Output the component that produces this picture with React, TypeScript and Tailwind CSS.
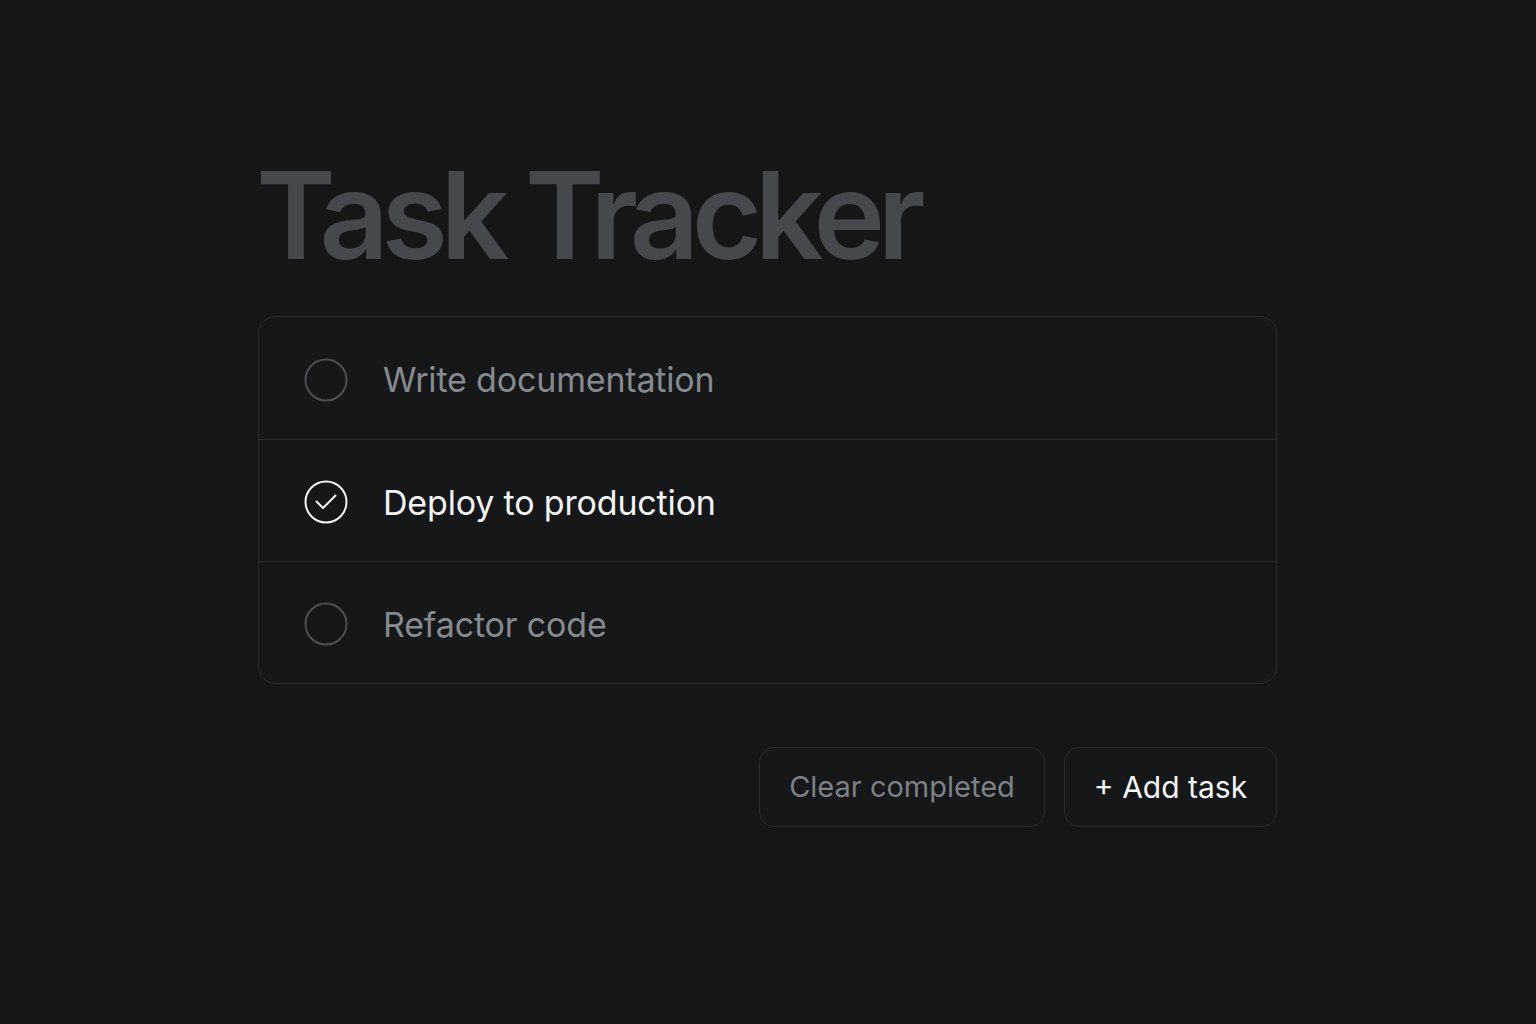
import React from "react";

const tasks = [
  { label: "Write documentation", done: false },
  { label: "Deploy to production", done: true },
  { label: "Refactor code", done: false },
];

function Circle({ done }: { done: boolean }) {
  return (
    <svg width="44" height="44" viewBox="0 0 44 44" className="shrink-0">
      <circle
        cx="22"
        cy="22"
        r="20.5"
        fill="none"
        stroke={done ? "#f2f3f4" : "#4b4e53"}
        strokeWidth="2"
      />
      {done && (
        <path
          d="M12.5 21.5 L19 28 L31.5 15.5"
          fill="none"
          stroke="#f2f3f4"
          strokeWidth="2"
          strokeLinecap="round"
          strokeLinejoin="round"
        />
      )}
    </svg>
  );
}

export default function App() {
  return (
    <div
      className="w-full h-[1024px] bg-[#151618] flex flex-col pl-[258px] pt-[140px]"
      style={{ fontFamily: "Inter, 'Noto Sans', sans-serif" }}
    >
      <h1 className="text-[121px] leading-[150px] font-semibold tracking-[-0.062em] text-[#45484c] ml-[-2px]">
        Task Tracker
      </h1>
      <div className="mt-[26px] w-[1019px] rounded-[17px] border border-[#2a2c30] bg-[#161719] flex flex-col">
        {tasks.map((t, i) => (
          <div
            key={t.label}
            className={`h-[122px] flex items-center pl-[45px] pt-[3px] gap-[35px] ${
              i > 0 ? "border-t border-[#2a2c30]" : ""
            }`}
          >
            <Circle done={t.done} />
            <span
              className={`text-[34px] tracking-[-0.005em] ${
                t.done ? "text-[#f2f3f4]" : "text-[#858a90]"
              }`}
            >
              {t.label}
            </span>
          </div>
        ))}
      </div>
      <div className="w-[1019px] flex justify-end gap-[19px] mt-[63px]">
        <button className="h-[80px] w-[286px] rounded-[15px] border border-[#2a2c30] bg-[#161719] text-[29px] text-[#7c8187] flex items-center justify-center">
          Clear completed
        </button>
        <button className="h-[80px] w-[213px] rounded-[15px] border border-[#2a2c30] bg-[#161719] text-[30px] text-[#f4f5f6] flex items-center justify-center">
          + Add task
        </button>
      </div>
    </div>
  );
}
